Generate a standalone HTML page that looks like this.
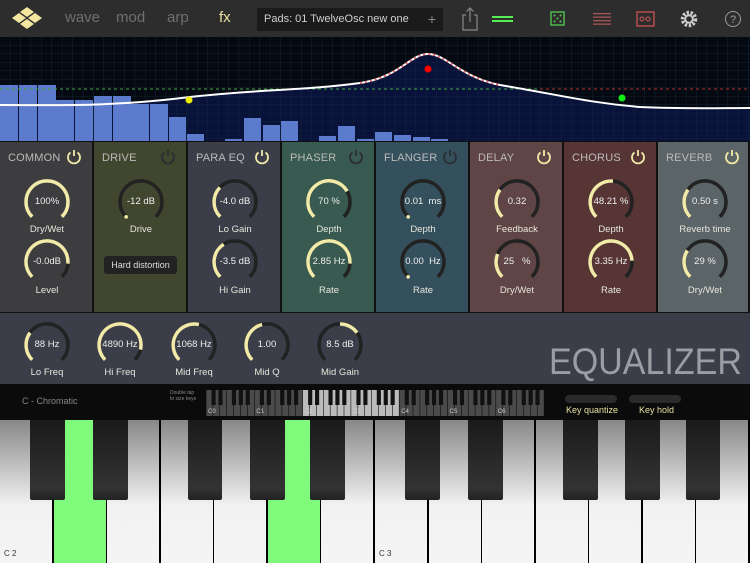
<!DOCTYPE html>
<html><head><meta charset="utf-8"><style>
*{margin:0;padding:0;box-sizing:border-box}
body{width:750px;height:563px;overflow:hidden;background:#000;font-family:"Liberation Sans",sans-serif;position:relative}
.abs{position:absolute}
#top{left:0;top:0;width:750px;height:37px;background:#2d2d2d}
.tab{position:absolute;top:9px;font-size:15px;color:#6f6f6f}
#preset{left:257px;top:8px;width:186px;height:23px;background:#1b1b1b;color:#cfcfcf;font-size:11px;line-height:23px;padding-left:7px}
.panel{position:absolute;top:142px;height:170px;border-right:2px solid #111}
.ptitle{position:absolute;left:8px;top:10px;font-size:11px;color:#bbb;letter-spacing:0.2px}
.lbl{position:absolute;font-size:9.5px;color:#e6e6dc;text-align:center;width:80px}
.val{position:absolute;font-size:9.5px;color:#eee;text-align:center;width:60px}
</style></head><body>
<div id="top" class="abs"></div>
<svg class="abs" style="left:10px;top:6px" width="36" height="26" viewBox="0 0 36 26">
<g fill="#f2e6a0"><polygon points="17,1 24,6 17,11 10,6"/><polygon points="9,7 16,12 9,17 2,12"/><polygon points="25,7 32,12 25,17 18,12"/><polygon points="17,13 24,18 17,23 10,18"/></g></svg>
<div class="tab" style="left:65px">wave</div><div class="tab" style="left:116px">mod</div><div class="tab" style="left:167px">arp</div><div class="tab" style="left:219px;color:#e8e0a0">fx</div>
<div id="preset" class="abs">Pads: 01 TwelveOsc new one<span style="position:absolute;right:7px;color:#888;font-size:14px">+</span></div>
<svg class="abs" style="left:460px;top:5px" width="290" height="28">
<g stroke="#888" fill="none" stroke-width="1.2"><path d="M6 10H3V25H17V10H14"/><path d="M10 3V17M6.5 6.5L10 3L13.5 6.5"/></g>
<rect x="32" y="11" width="21" height="2" fill="#5e5"/><rect x="32" y="15" width="21" height="2" fill="#5e5"/>
<rect x="91" y="7" width="13" height="13" fill="none" stroke="#5c5" stroke-width="1.3"/><g fill="#5c5"><circle cx="94.5" cy="10.5" r="1"/><circle cx="100.5" cy="10.5" r="1"/><circle cx="97.5" cy="13.5" r="1"/><circle cx="94.5" cy="16.5" r="1"/><circle cx="100.5" cy="16.5" r="1"/></g>
<g fill="#a55"><rect x="133" y="8" width="18" height="1.3"/><rect x="133" y="11.5" width="18" height="1.3"/><rect x="133" y="15" width="18" height="1.3"/><rect x="133" y="18.5" width="18" height="1.3"/></g>
<rect x="177" y="7" width="17" height="14" fill="none" stroke="#c55" stroke-width="1.3"/><circle cx="182" cy="14" r="2" fill="none" stroke="#c55"/><circle cx="188" cy="14" r="2" fill="none" stroke="#c55"/>
<circle cx="229" cy="14" r="6.5" fill="none" stroke="#ccc" stroke-width="3.5" stroke-dasharray="2.4 1.6"/><circle cx="229" cy="14" r="3.8" fill="none" stroke="#ccc" stroke-width="2"/>
<circle cx="273" cy="14" r="7.5" fill="none" stroke="#999" stroke-width="1"/><text x="273" y="18" font-size="11" fill="#999" text-anchor="middle" font-family="Liberation Sans">?</text>
</svg>
<svg class="abs" style="left:0;top:37px" width="750" height="105" id="eq">
<defs><pattern id="g" width="10.4" height="8.5" patternUnits="userSpaceOnUse"><path d="M10.4 0V8.5H0" fill="none" stroke="#16283a" stroke-width="0.8"/></pattern></defs>
<rect width="750" height="105" fill="#050a12"/>
<path d="M0 68 C60 68 110 70 190 60 C260 52 300 54 360 46 C400 40 410 17 428 17 C446 17 460 40 500 48 C560 58 590 66 640 70 C680 72 720 71 750 71 V105 H0Z" fill="#08123a"/>
<rect width="750" height="105" fill="url(#g)"/>
<g id="bars" fill="#5d7bcc"></g>
<line x1="0" y1="52" x2="750" y2="52" stroke="#4a4" stroke-dasharray="3 3" stroke-width="1"/>
<line x1="540" y1="52" x2="750" y2="52" stroke="#a33" stroke-dasharray="3 3" stroke-width="1"/>
<path d="M0 68 C60 68 110 70 190 60 C260 52 300 54 360 46 C400 40 410 17 428 17 C446 17 460 40 500 48 C560 58 590 66 640 70 C680 72 720 71 750 71" fill="none" stroke="#fff" stroke-width="2"/>
<path d="M360 46 C400 40 410 17 428 17 C446 17 460 40 500 48" fill="none" stroke="#d66" stroke-width="2" stroke-dasharray="2 3"/>
<circle cx="189" cy="63" r="3.5" fill="#ee0"/><circle cx="428" cy="32" r="3.5" fill="#f00"/><circle cx="622" cy="61" r="3.5" fill="#1e1"/>
</svg>
<div class="abs" style="left:0;top:141px;width:750px;height:172px;background:#111"></div>
<div id="panels"></div>
<div class="abs" style="left:0;top:313px;width:750px;height:71px;background:#3b3e48"></div>
<div class="abs" style="left:549px;top:341px;font-size:37px;color:#9a9da3;transform:scaleX(0.92);transform-origin:0 0;white-space:nowrap">EQUALIZER</div>
<svg id="knobs" class="abs" style="left:0;top:0" width="750" height="420"></svg>
<div id="texts"></div>
<div class="abs" style="left:0;top:384px;width:750px;height:36px;background:#0b0b0b"></div>
<div class="abs" style="left:22px;top:396px;font-size:9px;color:#888">C - Chromatic</div>
<div class="abs" style="left:170px;top:390px;font-size:5px;color:#888;line-height:6px">Double tap<br>to size keys</div>
<svg id="mini" class="abs" style="left:206px;top:390px" width="338" height="26"></svg>
<div class="abs" style="left:565px;top:395px;width:52px;height:8px;border-radius:4px;background:#2a2a2a"></div>
<div class="abs" style="left:629px;top:395px;width:52px;height:8px;border-radius:4px;background:#2a2a2a"></div>
<div class="abs" style="left:566px;top:405px;font-size:9px;color:#e8e0a0">Key quantize</div>
<div class="abs" style="left:639px;top:405px;font-size:9px;color:#e8e0a0">Key hold</div>
<div id="keys" class="abs" style="left:0;top:420px;width:750px;height:143px"></div>
<div class="abs" style="left:4px;top:549px;font-size:8px;color:#333">C 2</div>
<div class="abs" style="left:379px;top:549px;font-size:8px;color:#333">C 3</div>
<script>
var bars=[[0,18,85],[19,18,85],[38,18,85],[56,18,100],[75,18,100],[94,18,96],[113,18,96],[131,18,104],[150,18,104],[169,17,117],[187,17,134],[225,17,139],[244,17,118],[263,17,125],[281,17,121],[319,17,136],[338,17,126],[357,17,139],[375,17,132],[394,17,135],[413,17,137],[431,17,139]];
var b='';bars.forEach(function(a){b+='<rect x="'+a[0]+'" y="'+(a[2]-37)+'" width="'+a[1]+'" height="'+(141-a[2])+'"/>'});
document.getElementById('bars').innerHTML=b;
var P=[["COMMON","#3d3d40",1],["DRIVE","#41462f",0],["PARA EQ","#3b3e48",1],["PHASER","#385a50",0],["FLANGER","#35505d",0],["DELAY","#5f4545",1],["CHORUS","#573535",1],["REVERB","#5b6467",1]];
var h='';P.forEach(function(p,i){var x=i*94;h+='<div class="panel" style="left:'+x+'px;width:'+(i==7?92:94)+'px;background:'+p[1]+'"><div class="ptitle">'+p[0]+'</div></div>';});
document.getElementById('panels').innerHTML=h;
var K=[[0,0,"100%","Dry/Wet",1],[0,1,"-0.0dB","Level",0.85],[1,0,"-12 dB","Drive",0],[2,0,"-4.0 dB","Lo Gain",0.33],[2,1,"-3.5 dB","Hi Gain",0.38],[3,0,"70 %","Depth",0.72],[3,1,"2.85 Hz","Rate",0.85],[4,0,"0.01&nbsp; ms","Depth",0],[4,1,"0.00&nbsp; Hz","Rate",0],[5,0,"0.32","Feedback",0.3],[5,1,"25 &nbsp; %","Dry/Wet",0.25],[6,0,"48.21 %","Depth",0.52],[6,1,"3.35 Hz","Rate",0.82],[7,0,"0.50 s","Reverb time",0.3],[7,1,"29 %","Dry/Wet",0.29]];
var s='',t='';
function arc(cx,cy,r,a0,a1){function pt(f){var a=(225-270*f)*Math.PI/180;return [cx+r*Math.cos(a),cy-r*Math.sin(a)];}var p0=pt(a0),p1=pt(a1),large=(a1-a0)*270>180?1:0;return 'M'+p0[0].toFixed(1)+' '+p0[1].toFixed(1)+'A'+r+' '+r+' 0 '+large+' 1 '+p1[0].toFixed(1)+' '+p1[1].toFixed(1);}
function knob(cx,cy,v0,v1,val,lab,ly){s+='<path d="'+arc(cx,cy,21,0,1)+'" fill="none" stroke="#222" stroke-width="3.5"/>';
if(v1>v0)s+='<path d="'+arc(cx,cy,21,v0,v1)+'" fill="none" stroke="#f2eaa8" stroke-width="3.5"/>';else{var a=225*Math.PI/180;s+='<circle cx="'+(cx+21*Math.cos(a))+'" cy="'+(cy-21*Math.sin(a))+'" r="1.8" fill="#f2eaa8"/>';}
t+='<div class="val" style="left:'+(cx-30)+'px;top:'+(cy-6)+'px">'+val+'</div><div class="lbl" style="left:'+(cx-40)+'px;top:'+ly+'px">'+lab+'</div>';}
K.forEach(function(k){var cx=47+k[0]*94,cy=k[1]?262:202;knob(cx,cy,0,k[4],k[2],k[3],k[1]?285:224);});
var E=[[47,0,0.3,"88 Hz","Lo Freq"],[120,0,0.88,"4890 Hz","Hi Freq"],[194,0,0.55,"1068 Hz","Mid Freq"],[267,0,0.45,"1.00","Mid Q"],[340,0.5,0.7,"8.5 dB","Mid Gain"]];
E.forEach(function(e){knob(e[0],345,e[1],e[2],e[3],e[4],367);});
[0,1,2,3,4,5,6,7].forEach(function(i){var on=[0,2,5,6,7].indexOf(i)>=0;var cx=74+i*94,cy=157;var c=on?'#f2eaa8':'#2a2d33';s+='<path d="M'+(cx-3.5)+' '+(cy-4.5)+'A6 6 0 1 0 '+(cx+3.5)+' '+(cy-4.5)+'" fill="none" stroke="'+c+'" stroke-width="1.8"/><line x1="'+cx+'" y1="'+(cy-7)+'" x2="'+cx+'" y2="'+(cy-1)+'" stroke="'+c+'" stroke-width="1.8"/>';});
document.getElementById('knobs').innerHTML=s;
t+='<div class="abs" style="left:104px;top:256px;width:73px;height:18px;border-radius:3px;background:#222;color:#ddd;font-size:9px;line-height:18px;text-align:center">Hard distortion</div>';
document.getElementById('texts').innerHTML=t;
var m='',ow=48.3,ww=ow/7;for(var i=0;i<49;i++){var x=i*ww,hl=(x>=96.6&&x<193);m+='<rect x="'+(x+0.3)+'" y="0" width="'+(ww-0.6)+'" height="26" fill="'+(hl?'#bbb':'#4a4a4a')+'"/>';}
for(var o=0;o<7;o++)[0.6,1.6,3.55,4.55,5.55].forEach(function(f){var x=o*ow+f*ww+ww*0.2;m+='<rect x="'+x+'" y="0" width="'+(ww*0.6)+'" height="15" fill="#111"/>';});
for(o=0;o<7;o++)m+='<text x="'+(o*ow+2)+'" y="23" font-size="6" fill="#ccc" font-family="Liberation Sans">C'+o+'</text>';
document.getElementById('mini').innerHTML=m;
var w=750/14,k='';for(i=0;i<14;i++){var g=(i==1||i==5);k+='<div class="abs" style="left:'+(i*w)+'px;top:0;width:'+(w-1.5)+'px;height:143px;background:'+(g?'#80fa7a':'linear-gradient(#888,#f2f2f2 60%,#f4f4f4)')+'"></div>';}
[[30,35],[93,35],[188,34],[250,35],[310,35],[405,35],[468,35],[563,35],[625,35],[686,34]].forEach(function(b){k+='<div class="abs" style="left:'+b[0]+'px;top:0;width:'+b[1]+'px;height:80px;background:linear-gradient(#1a1a1a,#333 85%,#222);border-radius:0 0 2px 2px"></div>';});
document.getElementById('keys').innerHTML=k;
</script>
</body></html>
